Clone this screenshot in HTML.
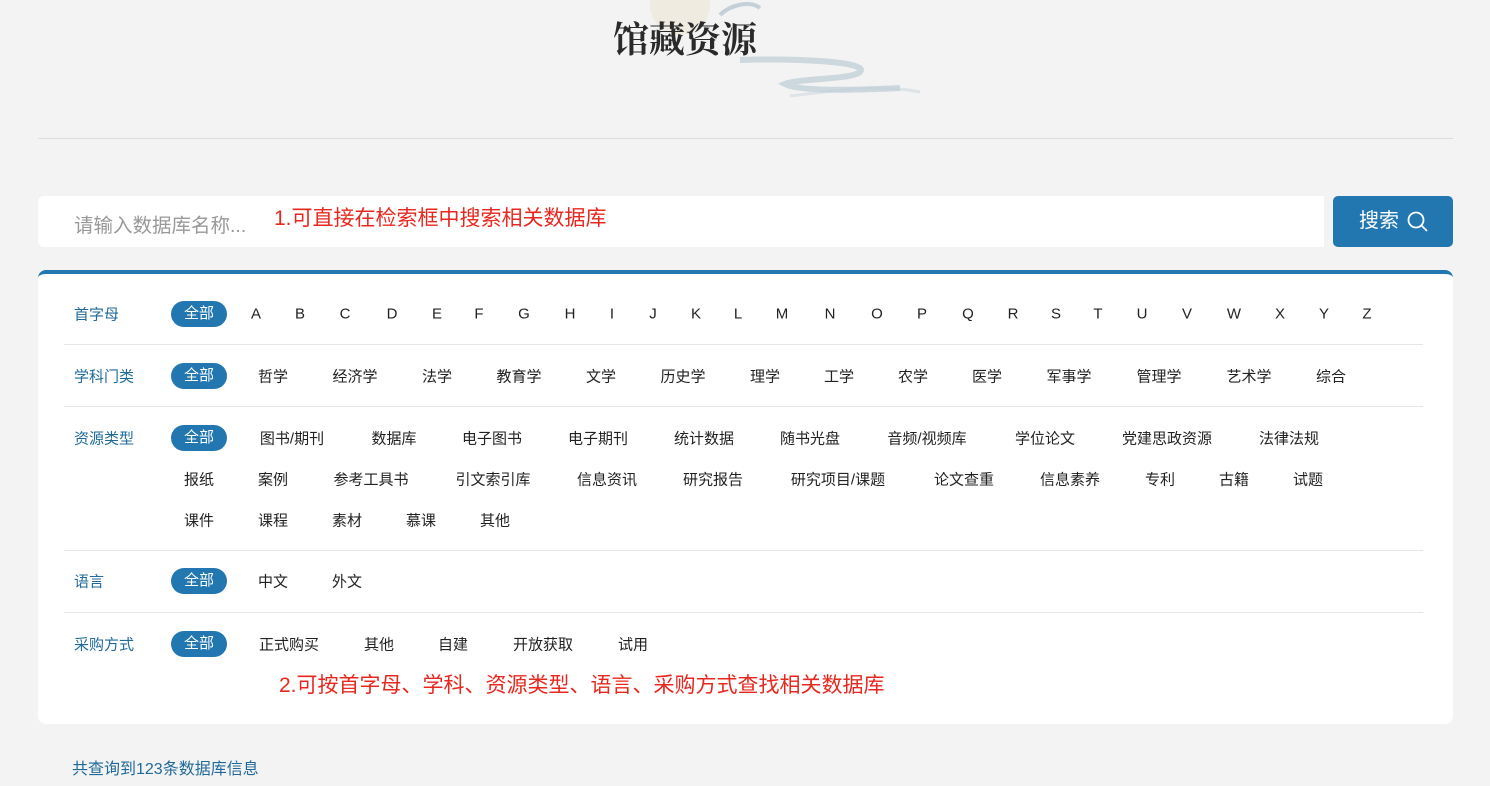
<!DOCTYPE html>
<html><head><meta charset="utf-8"><style>
*{margin:0;padding:0;box-sizing:border-box}
body{width:1490px;height:786px;overflow:hidden;background:#f3f3f3;font-family:"Liberation Sans","Noto Sans CJK SC",sans-serif;position:relative;color:#222}
.t{position:absolute;transform:translate(-50%,-50%);white-space:nowrap;font-size:15px;color:#222}
.l{position:absolute;transform:translateY(-50%);font-size:15px;color:#1f6a9a;white-space:nowrap}
.pill{position:absolute;left:171px;width:56px;height:26px;margin-top:-13px;border-radius:13px;background:#2277b0;color:#fff;font-size:15px;text-align:center;line-height:26px}
.hr{position:absolute;left:64px;width:1359px;height:1px;background:#e6e6e6}
.red{position:absolute;color:#e8281f;font-size:21px;white-space:nowrap}
</style></head><body>
<svg style="position:absolute;left:600px;top:0" width="340" height="100">
<circle cx="80" cy="5" r="30" fill="#efe6d6" opacity=".6"/>
<path d="M190 96 C240 90 280 84 320 92" stroke="#dde3e6" stroke-width="3" fill="none"/>
<path d="M140 60 C200 58 270 62 260 72 C250 80 200 78 185 84 C200 92 260 90 300 88" stroke="#c3d0d8" stroke-width="6" fill="none" opacity=".8"/>
<path d="M120 15 C130 5 150 0 160 8" stroke="#c3d0d8" stroke-width="4" fill="none"/>
</svg>
<div style="position:absolute;left:613px;top:12px;font-size:36px;font-weight:bold;font-family:'Noto Serif CJK SC',serif;color:#2a2a2a;letter-spacing:0px">馆藏资源</div>
<div style="position:absolute;left:38px;top:138px;width:1415px;height:1px;background:#dcdcdc"></div>
<div style="position:absolute;left:38px;top:196px;width:1286px;height:51px;background:#fff;border-radius:6px 0 0 6px"></div>
<div style="position:absolute;left:74px;top:209px;font-size:19.5px;color:#999">请输入数据库名称...</div>
<div class="red" style="left:274px;top:202px">1.可直接在检索框中搜索相关数据库</div>
<div style="position:absolute;left:1333px;top:196px;width:120px;height:51px;background:#2277b0;border-radius:5px;color:#fff;font-size:20px;line-height:51px;padding-left:26px">搜索
<svg style="position:absolute;left:74px;top:15px" width="22" height="22"><circle cx="9" cy="9" r="7.5" stroke="#fff" stroke-width="1.8" fill="none"/><path d="M14.5 14.5 L20 20" stroke="#fff" stroke-width="1.8"/></svg></div>
<div style="position:absolute;left:38px;top:270px;width:1415px;height:454px;background:#fff;border-radius:8px;border-top:4px solid #2277b0"></div>

<div class="l" style="left:74px;top:314px">首字母</div><div class="pill" style="top:314px">全部</div>
<span class="t" style="left:256px;top:314px">A</span><span class="t" style="left:300px;top:314px">B</span><span class="t" style="left:345px;top:314px">C</span><span class="t" style="left:392px;top:314px">D</span><span class="t" style="left:437px;top:314px">E</span><span class="t" style="left:479px;top:314px">F</span><span class="t" style="left:524px;top:314px">G</span><span class="t" style="left:570px;top:314px">H</span><span class="t" style="left:612px;top:314px">I</span><span class="t" style="left:653px;top:314px">J</span><span class="t" style="left:696px;top:314px">K</span><span class="t" style="left:738px;top:314px">L</span><span class="t" style="left:782px;top:314px">M</span><span class="t" style="left:830px;top:314px">N</span><span class="t" style="left:877px;top:314px">O</span><span class="t" style="left:922px;top:314px">P</span><span class="t" style="left:968px;top:314px">Q</span><span class="t" style="left:1013px;top:314px">R</span><span class="t" style="left:1056px;top:314px">S</span><span class="t" style="left:1098px;top:314px">T</span><span class="t" style="left:1142px;top:314px">U</span><span class="t" style="left:1187px;top:314px">V</span><span class="t" style="left:1234px;top:314px">W</span><span class="t" style="left:1280px;top:314px">X</span><span class="t" style="left:1324px;top:314px">Y</span><span class="t" style="left:1367px;top:314px">Z</span>
<div class="hr" style="top:344px"></div>

<div class="l" style="left:74px;top:376px">学科门类</div><div class="pill" style="top:376px">全部</div>
<span class="t" style="left:273px;top:376px">哲学</span><span class="t" style="left:355px;top:376px">经济学</span><span class="t" style="left:437px;top:376px">法学</span><span class="t" style="left:519px;top:376px">教育学</span><span class="t" style="left:601px;top:376px">文学</span><span class="t" style="left:683px;top:376px">历史学</span><span class="t" style="left:765px;top:376px">理学</span><span class="t" style="left:839px;top:376px">工学</span><span class="t" style="left:913px;top:376px">农学</span><span class="t" style="left:987px;top:376px">医学</span><span class="t" style="left:1069px;top:376px">军事学</span><span class="t" style="left:1159px;top:376px">管理学</span><span class="t" style="left:1249px;top:376px">艺术学</span><span class="t" style="left:1331px;top:376px">综合</span>
<div class="hr" style="top:406px"></div>

<div class="l" style="left:74px;top:438px">资源类型</div><div class="pill" style="top:438px">全部</div>
<span class="t" style="left:292px;top:438px">图书/期刊</span><span class="t" style="left:394px;top:438px">数据库</span><span class="t" style="left:492px;top:438px">电子图书</span><span class="t" style="left:598px;top:438px">电子期刊</span><span class="t" style="left:704px;top:438px">统计数据</span><span class="t" style="left:810px;top:438px">随书光盘</span><span class="t" style="left:927px;top:438px">音频/视频库</span><span class="t" style="left:1045px;top:438px">学位论文</span><span class="t" style="left:1167px;top:438px">党建思政资源</span><span class="t" style="left:1289px;top:438px">法律法规</span>
<span class="t" style="left:199px;top:479px">报纸</span><span class="t" style="left:273px;top:479px">案例</span><span class="t" style="left:371px;top:479px">参考工具书</span><span class="t" style="left:493px;top:479px">引文索引库</span><span class="t" style="left:607px;top:479px">信息资讯</span><span class="t" style="left:713px;top:479px">研究报告</span><span class="t" style="left:838px;top:479px">研究项目/课题</span><span class="t" style="left:964px;top:479px">论文查重</span><span class="t" style="left:1070px;top:479px">信息素养</span><span class="t" style="left:1160px;top:479px">专利</span><span class="t" style="left:1234px;top:479px">古籍</span><span class="t" style="left:1308px;top:479px">试题</span>
<span class="t" style="left:199px;top:520px">课件</span><span class="t" style="left:273px;top:520px">课程</span><span class="t" style="left:347px;top:520px">素材</span><span class="t" style="left:421px;top:520px">慕课</span><span class="t" style="left:495px;top:520px">其他</span>
<div class="hr" style="top:550px"></div>

<div class="l" style="left:74px;top:581px">语言</div><div class="pill" style="top:581px">全部</div>
<span class="t" style="left:273px;top:581px">中文</span><span class="t" style="left:347px;top:581px">外文</span>
<div class="hr" style="top:612px"></div>

<div class="l" style="left:74px;top:644px">采购方式</div><div class="pill" style="top:644px">全部</div>
<span class="t" style="left:289px;top:644px">正式购买</span><span class="t" style="left:379px;top:644px">其他</span><span class="t" style="left:453px;top:644px">自建</span><span class="t" style="left:543px;top:644px">开放获取</span><span class="t" style="left:633px;top:644px">试用</span>
<div class="red" style="left:279px;top:669px">2.可按首字母、学科、资源类型、语言、采购方式查找相关数据库</div>

<div class="l" style="left:72px;top:767px;font-size:16px">共查询到123条数据库信息</div>
</body></html>
